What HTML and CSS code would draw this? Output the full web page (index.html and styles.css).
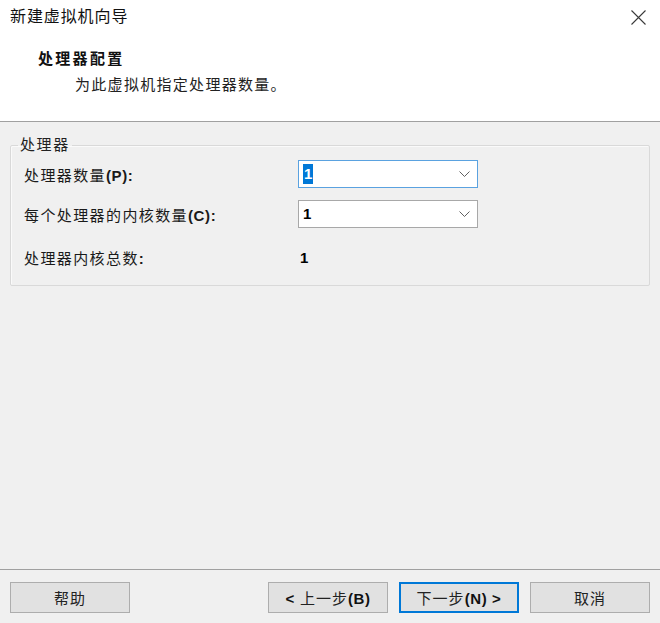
FILE: index.html
```html
<!DOCTYPE html>
<html lang="zh-CN">
<head>
<meta charset="utf-8">
<title>新建虚拟机向导</title>
<link rel="stylesheet" href="styles.css">
</head>
<body>
<div class="window">
  <div class="header">
    <div class="titlebar">
      <span class="title">新建虚拟机向导</span>
      <span class="close" aria-label="关闭">
        <svg width="15" height="15" viewBox="0 0 15 15"><path d="M0.5 0.5L14.5 14.5M14.5 0.5L0.5 14.5" stroke="#3a3a3a" stroke-width="1.1" fill="none"/></svg>
      </span>
    </div>
    <div class="heading">处理器配置</div>
    <div class="subheading">为此虚拟机指定处理器数量。</div>
  </div>

  <div class="content">
    <fieldset class="group">
      <legend class="group-label">处理器</legend>
      <div class="rows">
        <div class="row">
          <span class="label">处理器数量<span class="lat">(P):</span></span>
          <div class="combo focused">
            <span class="value"><span class="selected">1</span></span>
            <svg class="chev" width="11" height="6" viewBox="0 0 11 6"><path d="M0.5 0.5L5.5 5.5L10.5 0.5" stroke="#606060" stroke-width="1" fill="none"/></svg>
          </div>
        </div>
        <div class="row">
          <span class="label">每个处理器的内核数量<span class="lat">(C):</span></span>
          <div class="combo">
            <span class="value">1</span>
            <svg class="chev" width="11" height="6" viewBox="0 0 11 6"><path d="M0.5 0.5L5.5 5.5L10.5 0.5" stroke="#606060" stroke-width="1" fill="none"/></svg>
          </div>
        </div>
        <div class="row total">
          <span class="label">处理器内核总数<span class="lat">:</span></span>
          <span class="total-value">1</span>
        </div>
      </div>
    </fieldset>
  </div>

  <div class="footer">
    <button class="btn">帮助</button>
    <div class="spacer"></div>
    <button class="btn"><span class="lat">&lt;</span> 上一步<span class="lat">(B)</span></button>
    <button class="btn default">下一步<span class="lat">(N) &gt;</span></button>
    <button class="btn">取消</button>
  </div>
</div>
</body>
</html>
```

FILE: styles.css
```css
html, body {
  margin: 0;
  padding: 0;
  background: #f0f0f0;
}

body {
  font-family: "Liberation Sans", "Noto Sans CJK SC", sans-serif;
  color: #1a1a1a;
  overflow: hidden;
}

.window {
  width: 660px;
  height: 623px;
  display: flex;
  flex-direction: column;
}

.header {
  background: #ffffff;
  height: 121px;
  border-bottom: 1px solid #a0a0a0;
  box-sizing: content-box;
}

.titlebar {
  height: 34px;
  display: flex;
  align-items: center;
  justify-content: space-between;
  padding: 0 14px 0 10px;
}

.title {
  font-size: 16px;
  letter-spacing: 0.9px;
  line-height: 34px;
  color: #111;
}

.close {
  display: flex;
  align-items: center;
  margin-top: 1px;
}

.heading {
  margin-top: 15px;
  padding-left: 38px;
  font-size: 15px;
  font-weight: bold;
  letter-spacing: 2.3px;
  line-height: 20px;
  color: #111;
}

.subheading {
  margin-top: 6px;
  padding-left: 75px;
  font-size: 15px;
  letter-spacing: 1.3px;
  line-height: 20px;
  color: #222;
}

.content {
  flex: 1;
  padding: 14px 10px 0 10px;
}

.group {
  margin: 0;
  padding: 6px 13px 14px 13px;
  border: 1px solid #d9d9d9;
  box-shadow: inset 1px 1px 0 #fafafa;
  border-radius: 2px;
  min-width: 0;
}

.group-label {
  margin-left: -6px;
  padding: 0 2px;
  font-size: 15px;
  letter-spacing: 1.6px;
  line-height: 18px;
  color: #222;
}

.rows {
  display: flex;
  flex-direction: column;
  gap: 12px;
}

.row {
  display: grid;
  grid-template-columns: 274px 180px;
  align-items: center;
  height: 28px;
}

.row.total {
  margin-top: 3px;
}

.label {
  font-size: 15px;
  letter-spacing: 1.4px;
  color: #1a1a1a;
  white-space: nowrap;
}

.lat {
  font-weight: bold;
  letter-spacing: 0.6px;
}

.combo {
  box-sizing: border-box;
  height: 28px;
  width: 180px;
  background: #ffffff;
  border: 1px solid #a8a8a8;
  display: flex;
  align-items: center;
  justify-content: space-between;
  padding: 0 7px 0 4px;
}

.combo.focused {
  border-color: #5aa2e0;
}

.value {
  font-size: 15px;
  font-weight: bold;
  line-height: 20px;
  color: #000;
}

.selected {
  display: inline-block;
  background: #0078d7;
  color: #ffffff;
  padding: 0 1px;
  line-height: 20px;
}

.chev {
  display: block;
}

.total-value {
  font-size: 15px;
  font-weight: bold;
  padding-left: 2px;
  color: #000;
}

.footer {
  height: 54px;
  border-top: 1px solid #a0a0a0;
  display: flex;
  align-items: flex-start;
  gap: 11px;
  padding: 12px 10px 0 10px;
  box-sizing: border-box;
}

.spacer {
  flex: 1;
}

.btn {
  box-sizing: border-box;
  width: 120px;
  height: 31px;
  margin: 0;
  padding: 0;
  background: #e1e1e1;
  border: 1px solid #adadad;
  font-family: "Liberation Sans", "Noto Sans CJK SC", sans-serif;
  font-size: 15px;
  color: #222;
  letter-spacing: 1px;
}

.btn .lat {
  font-weight: bold;
  color: #111;
}

.btn.default {
  border: 2px solid #0078d7;
}
```
